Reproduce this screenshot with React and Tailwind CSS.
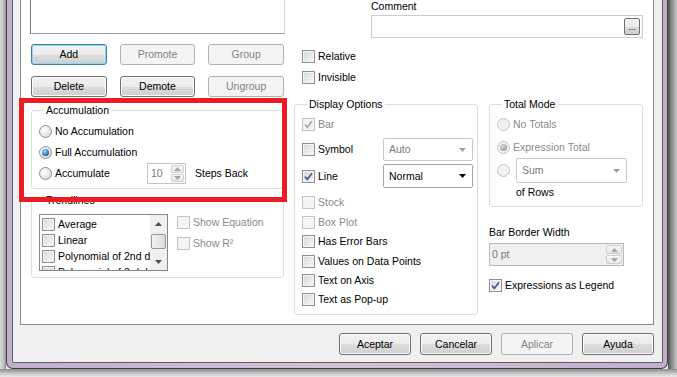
import React from 'react';

function Btn({ label, disabled, focused, className = '' }) {
  let tone =
    'border-[#707070] bg-[linear-gradient(#f2f2f2,#ebebeb_50%,#dddddd_51%,#cfcfcf)] text-black shadow-[inset_0_0_0_1px_#fbfbfb]';
  if (disabled) tone = 'border-[#adb2b5] bg-[#f4f4f4] text-[#838383]';
  if (focused)
    tone =
      'border-[#3c7fb1] bg-[linear-gradient(#f2f2f2,#ebebeb_50%,#dddddd_51%,#cfcfcf)] text-black shadow-[inset_0_0_0_1px_#8fd6f8]';
  return (
    <div className={`flex items-center justify-center rounded-[3px] border ${tone} ${className}`}>
      {label}
    </div>
  );
}

function Check({ checked, disabled }) {
  return (
    <span
      className={`flex h-[13px] w-[13px] shrink-0 items-center justify-center border ${
        disabled
          ? 'border-[#c4c4c4] bg-[#f4f4f4]'
          : 'border-[#8e8f8f] bg-[linear-gradient(135deg,#d6d6d6,#f8f8f8)] shadow-[inset_0_0_0_1px_#f4f4f4]'
      }`}
    >
      {checked && (
        <svg width="9" height="9" viewBox="0 0 9 9">
          <path
            d="M1 4.6L3.4 7.3L8 1.2"
            fill="none"
            stroke={disabled ? '#a8a8a8' : '#4a5c91'}
            strokeWidth="1.7"
          />
        </svg>
      )}
    </span>
  );
}

function CheckRow({ label, checked, disabled, className = '' }) {
  return (
    <div className={`flex items-center gap-[3px] whitespace-nowrap ${className}`}>
      <Check checked={checked} disabled={disabled} />
      <span className={disabled ? 'text-[#8a8a8a]' : ''}>{label}</span>
    </div>
  );
}

function Radio({ checked, disabled }) {
  return (
    <span
      className={`flex h-[13px] w-[13px] shrink-0 items-center justify-center rounded-full border ${
        disabled
          ? 'border-[#c4c4c4] bg-[#f2f2f2]'
          : 'border-[#8e8f8f] bg-[radial-gradient(circle_at_35%_35%,#ffffff,#d2d2d2)]'
      }`}
    >
      {checked && (
        <span
          className={`h-[7px] w-[7px] rounded-full ${
            disabled
              ? 'bg-[radial-gradient(circle_at_40%_35%,#d8d8d8,#8a8a8a)]'
              : 'bg-[radial-gradient(circle_at_40%_35%,#9fdcfa,#1d64a8_70%,#123e6e)]'
          }`}
        />
      )}
    </span>
  );
}

function RadioRow({ label, checked, disabled, className = '' }) {
  return (
    <div className={`flex items-center gap-[3px] whitespace-nowrap ${className}`}>
      <Radio checked={checked} disabled={disabled} />
      <span className={disabled ? 'text-[#8a8a8a]' : ''}>{label}</span>
    </div>
  );
}

function Group({ title, className = '', children }) {
  return (
    <fieldset className={`rounded-[3px] border border-[#d5dfe5] ${className}`}>
      <legend className="ml-[5px] px-[2px] leading-[13px]">{title}</legend>
      {children}
    </fieldset>
  );
}

function Arrow({ up, color = '#5a5a5a' }) {
  return (
    <svg width="7" height="4" viewBox="0 0 7 4">
      <path d={up ? 'M0 4H7L3.5 0Z' : 'M0 0H7L3.5 4Z'} fill={color} />
    </svg>
  );
}

function Combo({ value, disabled, className = '' }) {
  return (
    <div
      className={`flex items-center justify-between rounded-[2px] border bg-white pl-[5px] pr-[6px] ${
        disabled ? 'border-[#c8c8c8] text-[#7a7a7a]' : 'border-[#a5a5a5]'
      } ${className}`}
    >
      <span>{value}</span>
      <Arrow color={disabled ? '#a0a0a0' : '#000'} />
    </div>
  );
}

function SpinArrows({ className = '' }) {
  return (
    <div className={`flex flex-col gap-[1px] ${className}`}>
      <div className="flex flex-1 items-center justify-center rounded-[2px] border border-[#cfcfcf] bg-[linear-gradient(#f7f7f7,#e6e6e6)]">
        <Arrow up color="#a6a6a6" />
      </div>
      <div className="flex flex-1 items-center justify-center rounded-[2px] border border-[#cfcfcf] bg-[linear-gradient(#f7f7f7,#e6e6e6)]">
        <Arrow color="#a6a6a6" />
      </div>
    </div>
  );
}

const trendItems = ['Average', 'Linear', 'Polynomial of 2nd degree', 'Polynomial of 3rd degree'];

export default function App() {
  return (
    <div className="relative flex h-[377px] w-[677px] flex-col overflow-hidden bg-[#e9e9e9] font-['Liberation_Sans',Arial,sans-serif] text-[10.5px] leading-[13px] text-black">
      <div className="flex h-[369px]">
        <div className="w-[6px] bg-[linear-gradient(90deg,#dcdcdc,#b9b9b9_70%,#8c8c8c)]" />

        {/* window frame */}
        <div className="flex w-[662px] flex-col rounded-b-[7px] border-x border-b border-[#3f3f3f] bg-[linear-gradient(90deg,#c3afca,#d2c3d8_50%,#c3afca)] pb-[5px] pl-[5px] pr-[4px]">
          <div className="flex flex-1 flex-col rounded-b-[2px] border-x border-b border-[#5e5e5e] bg-[#f0f0f0] pl-[7px] pr-[8px]">
            {/* tab page */}
            <div className="flex h-[325px] w-[634px] border-x border-b border-[#898c95] bg-white">
              {/* left column */}
              <div className="flex w-[268px] flex-col pl-[10px]">
                <div className="-ml-px h-[34px] w-[255px] border-b border-l border-r border-b-[#a0a0a0] border-l-[#7e7e7e] border-r-[#dcdcdc] bg-white" />

                <div className="mt-[10px] grid w-[253px] grid-cols-3 gap-x-[13px] gap-y-[11px]">
                  <Btn label="Add" focused className="h-[21px]" />
                  <Btn label="Promote" disabled className="h-[21px]" />
                  <Btn label="Group" disabled className="h-[21px]" />
                  <Btn label="Delete" className="h-[21px]" />
                  <Btn label="Demote" className="h-[21px]" />
                  <Btn label="Ungroup" disabled className="h-[21px]" />
                </div>

                <Group title="Accumulation" className="mt-[7px] w-[253px] pb-[4px] pl-[7px] pt-[4px]">
                  <RadioRow label="No Accumulation" className="h-[21px]" />
                  <RadioRow label="Full Accumulation" checked className="h-[21px]" />
                  <div className="flex h-[21px] items-center">
                    <Radio />
                    <span className="ml-[3px] w-[92px]">Accumulate</span>
                    <div className="flex h-[21px] w-[39px] items-center border border-[#c4c4c4] bg-white pl-[3px] pr-[1px] text-[#7a7a7a]">
                      <span className="flex-1">10</span>
                      <SpinArrows className="h-[17px] w-[13px]" />
                    </div>
                    <span className="ml-[9px]">Steps Back</span>
                  </div>
                </Group>

                <Group title="Trendlines" className="mt-[5px] w-[253px] pb-[6px] pl-[7px] pt-[7px]">
                  <div className="flex">
                    <div className="flex h-[57px] w-[129px] border border-[#828790] bg-white">
                      <div className="flex-1 overflow-hidden pl-[2px] pt-[1px]">
                        {trendItems.map((t) => (
                          <div key={t} className="flex h-[16px] items-center gap-[3px] whitespace-nowrap">
                            <Check />
                            <span>{t}</span>
                          </div>
                        ))}
                      </div>
                      <div className="flex w-[17px] flex-col items-center bg-[#f0f0f0]">
                        <div className="flex h-[17px] items-center justify-center">
                          <Arrow up color="#4d4d4d" />
                        </div>
                        <div className="mt-[2px] h-[15px] w-[15px] rounded-[2px] border border-[#979797] bg-[linear-gradient(90deg,#f3f3f3,#dcdcdc)]" />
                        <div className="flex-1" />
                        <div className="flex h-[17px] items-center justify-center">
                          <Arrow color="#4d4d4d" />
                        </div>
                      </div>
                    </div>
                    <div className="-mt-[2px] ml-[9px] flex flex-col">
                      <CheckRow label="Show Equation" disabled className="h-[21px]" />
                      <CheckRow label="Show R²" disabled className="h-[21px]" />
                    </div>
                  </div>
                </Group>
              </div>

              {/* right area */}
              <div className="flex flex-1 flex-col">
                <div className="ml-[82px] flex flex-col">
                  <span className="h-[13px]">Comment</span>
                  <div className="mt-[2px] flex h-[23px] w-[272px] items-center justify-end border border-[#c9ccd3] bg-white pr-[2px]">
                    <div className="flex h-[17px] w-[16px] items-end justify-center rounded-[2px] border border-[#707070] bg-[linear-gradient(#f2f2f2,#ebebeb_50%,#dddddd_51%,#cfcfcf)] pb-[2px] text-[9px] leading-[9px]">
                      ...
                    </div>
                  </div>
                </div>

                <CheckRow label="Relative" className="ml-[13px] mt-[8px] h-[21px]" />
                <CheckRow label="Invisible" className="ml-[13px] h-[21px]" />

                <div className="mt-[10px] flex">
                  <Group title="Display Options" className="ml-[5px] w-[184px] pb-[5px] pl-[7px] pt-[3px]">
                    <CheckRow label="Bar" checked disabled className="h-[20px]" />
                    <div className="mt-[4px] flex h-[23px] items-center">
                      <CheckRow label="Symbol" className="w-[81px]" />
                      <Combo value="Auto" disabled className="h-[23px] w-[90px]" />
                    </div>
                    <div className="mt-[3px] flex h-[24px] items-center">
                      <CheckRow label="Line" checked className="w-[81px]" />
                      <Combo value="Normal" className="h-[24px] w-[90px]" />
                    </div>
                    <CheckRow label="Stock" disabled className="mt-[4px] h-[20px]" />
                    <CheckRow label="Box Plot" disabled className="h-[20px]" />
                    <CheckRow label="Has Error Bars" className="h-[19px]" />
                    <CheckRow label="Values on Data Points" className="h-[20px]" />
                    <CheckRow label="Text on Axis" className="h-[19px]" />
                    <CheckRow label="Text as Pop-up" className="h-[19px]" />
                  </Group>

                  <div className="ml-[11px] flex w-[154px] flex-col">
                    <Group title="Total Mode" className="w-[154px] pb-[7px] pl-[7px] pt-[3px]">
                      <RadioRow label="No Totals" disabled className="h-[20px]" />
                      <RadioRow label="Expression Total" checked disabled className="mt-[3px] h-[20px]" />
                      <div className="mt-[1px] flex h-[25px] items-center">
                        <Radio disabled />
                        <Combo value="Sum" disabled className="ml-[6px] h-[25px] w-[111px] text-[#5e5e5e]" />
                      </div>
                      <div className="ml-[19px] mt-[2px] flex h-[14px] items-center">of Rows</div>
                    </Group>

                    <span className="mt-[19px] h-[13px]">Bar Border Width</span>
                    <div className="mt-[4px] flex h-[23px] w-[135px] items-center border border-[#b9b9b9] bg-[#f0f0f0] pl-[2px] pr-[1px] text-[#7a7a7a]">
                      <span className="flex-1">0 pt</span>
                      <SpinArrows className="h-[19px] w-[16px]" />
                    </div>
                    <CheckRow label="Expressions as Legend" checked className="mt-[9px] h-[20px]" />
                  </div>
                </div>
              </div>
            </div>

            {/* dialog buttons */}
            <div className="flex h-[37px] justify-end gap-[9px] pt-[8px]">
              <Btn label="Aceptar" className="h-[22px] w-[72px]" />
              <Btn label="Cancelar" className="h-[22px] w-[72px]" />
              <Btn label="Aplicar" disabled className="h-[22px] w-[72px]" />
              <Btn label="Ayuda" className="h-[22px] w-[72px]" />
            </div>
          </div>
        </div>

        <div className="w-[9px] bg-[linear-gradient(90deg,#4e4e4e,#8a8a8a_40%,#cacaca)]" />
      </div>
      <div className="h-[8px] bg-[linear-gradient(#8a8a8a,#c4c4c4_50%,#e9e9e9)]" />

      {/* annotation */}
      <div className="absolute left-[19px] top-[98px] h-[104px] w-[268px] border-[5px] border-[#ed1c24]" />
    </div>
  );
}
